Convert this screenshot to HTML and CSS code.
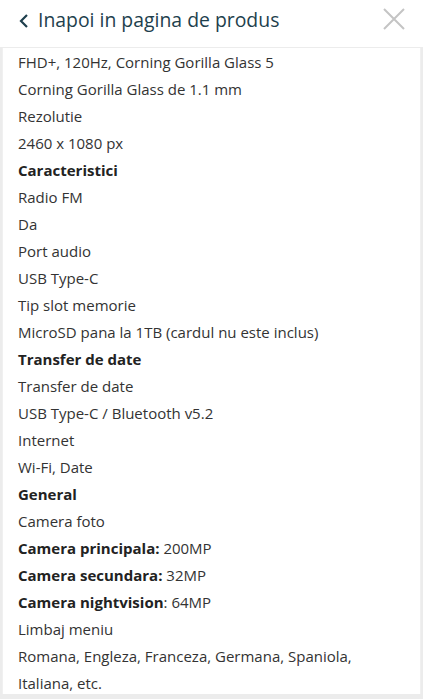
FILE: index.html
```html
<!DOCTYPE html>
<html>
<head>
<meta charset="utf-8">
<link rel="stylesheet" href="styles.css">
</head>
<body>
<div class="page">
  <header class="topbar">
    <a class="back">
      <svg class="chev" width="12" height="18" viewBox="0 0 12 18"><path d="M9 3 L3 9 L9 15" fill="none" stroke="#1e3f4d" stroke-width="2.2"/></svg>
      <span>Inapoi in pagina de produs</span>
    </a>
    <svg class="close" width="24" height="24" viewBox="0 0 24 24"><path d="M2 2 L22 22 M22 2 L2 22" stroke="#c4c4c4" stroke-width="2"/></svg>
  </header>
  <main class="card">
    <p>FHD+, 120Hz, Corning Gorilla Glass 5</p>
    <p>Corning Gorilla Glass de 1.1 mm</p>
    <p>Rezolutie</p>
    <p>2460 x 1080 px</p>
    <p><b>Caracteristici</b></p>
    <p>Radio FM</p>
    <p>Da</p>
    <p>Port audio</p>
    <p>USB Type-C</p>
    <p>Tip slot memorie</p>
    <p>MicroSD pana la 1TB (cardul nu este inclus)</p>
    <p><b>Transfer de date</b></p>
    <p>Transfer de date</p>
    <p>USB Type-C / Bluetooth v5.2</p>
    <p>Internet</p>
    <p>Wi-Fi, Date</p>
    <p><b>General</b></p>
    <p>Camera foto</p>
    <p><b>Camera principala:</b> 200MP</p>
    <p><b>Camera secundara:</b> 32MP</p>
    <p><b>Camera nightvision</b>: 64MP</p>
    <p>Limbaj meniu</p>
    <p>Romana, Engleza, Franceza, Germana, Spaniola, Italiana, etc.</p>
  </main>
</div>
</body>
</html>
```
FILE: styles.css
```css
html, body {
  margin: 0;
  padding: 0;
  background: #ececec;
}
body {
  font-family: "Open Sans", "Liberation Sans", sans-serif;
  color: #333;
}
.page {
  width: 423px;
  height: 699px;
  overflow: hidden;
  background: #ececec;
}
.topbar {
  height: 48px;
  background: #fff;
  border-bottom: 1px solid #ececec;
  display: flex;
  align-items: center;
  justify-content: space-between;
  padding: 0 17px 0 18px;
  box-sizing: border-box;
}
.back {
  display: flex;
  align-items: center;
  gap: 8px;
  color: #1e3f4d;
  font-size: 19.4px;
  margin-top: -8px;
}
.chev {
  margin-top: 2px;
}
.close {
  margin-top: -9px;
}
.card {
  background: #fff;
  margin: 0 2px;
  border-left: 1px solid #f0f0f0;
  border-right: 1px solid #f0f0f0;
  padding: 1px 16px 0 15px;
  height: 646px;
  box-sizing: border-box;
}
.card p {
  margin: 0;
  font-size: 15px;
  line-height: 27px;
}
.card b {
  font-weight: 700;
  color: #222;
}
```
